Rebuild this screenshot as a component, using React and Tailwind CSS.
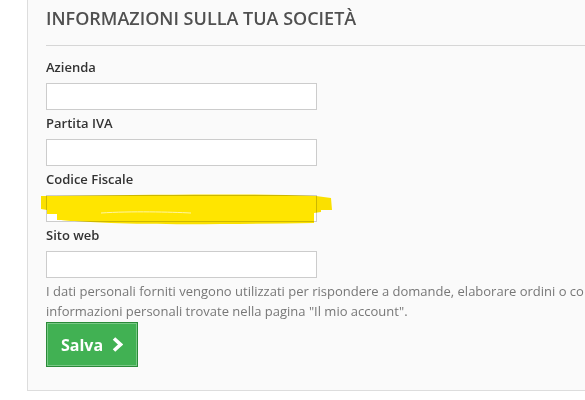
import React from "react";

function Field({ label }) {
  return (
    <div className="flex flex-col mb-[3px]">
      <label className="text-[13px] leading-[20px] font-semibold text-[#333] mb-[6px]">{label}</label>
      <div className="w-[271px] h-[27px] bg-white border border-[#cccccc]" />
    </div>
  );
}

export default function App() {
  return (
    <div
      className="w-[585px] h-[400px] overflow-hidden bg-white"
      style={{ fontFamily: '"Open Sans", "Liberation Sans", sans-serif' }}
    >
      <div className="relative ml-[27px] w-[700px] border-l border-b border-[#dddddd] bg-[#fafafa] pl-[18px] pb-[23px]">
        <h2 className="pt-[4px] pb-[13px] text-[18px] leading-[28px] font-semibold uppercase text-[#505050] border-b border-[#d6d6d6]">
          Informazioni sulla tua società
        </h2>
        <div className="mt-[11px]">
          <Field label="Azienda" />
          <Field label="Partita IVA" />
          <Field label="Codice Fiscale" />
          <Field label="Sito web" />
        </div>
        <p className="text-[13px] leading-[20px] text-[#777]">
          <span className="whitespace-nowrap">
            I dati personali forniti vengono utilizzati per rispondere a domande, elaborare ordini o consentire l'accesso a specifiche
          </span>
          <br />
          informazioni personali trovate nella pagina "Il mio account".
        </p>
        <button className="mt-[1px] flex items-center gap-[9px] w-[92px] h-[45px] pl-[14px] bg-[#41b153] border border-[#2a8a38] shadow-[inset_0_0_0_1px_rgba(255,255,255,0.3)] text-white text-[16px] font-bold">
          Salva
          <svg width="11" height="15" viewBox="0 0 11 15">
            <path d="M2 1.5 L8.5 7.5 L2 13.5" fill="none" stroke="white" strokeWidth="3.6" strokeLinejoin="miter" />
          </svg>
        </button>
        <svg
          className="absolute left-[13px] top-[193px] mix-blend-multiply pointer-events-none"
          width="300"
          height="36"
          viewBox="0 0 300 36"
        >
          <path
            d="M14 3 C 90 2, 200 0, 275 3 L 290 5 L 291 17 L 280 17 L 280 19 L 273 20 L 273 30 C 200 31, 120 32, 70 30 C 40 29, 20 27, 16 27 L 16 21 L 6 21 L 6 17 L 0 16 L 0 3 Z"
            fill="#ffe500"
          />
          <path d="M60 20 C 90 18, 130 19, 150 20" fill="none" stroke="#fff6a0" strokeWidth="1" />
        </svg>
      </div>
    </div>
  );
}
